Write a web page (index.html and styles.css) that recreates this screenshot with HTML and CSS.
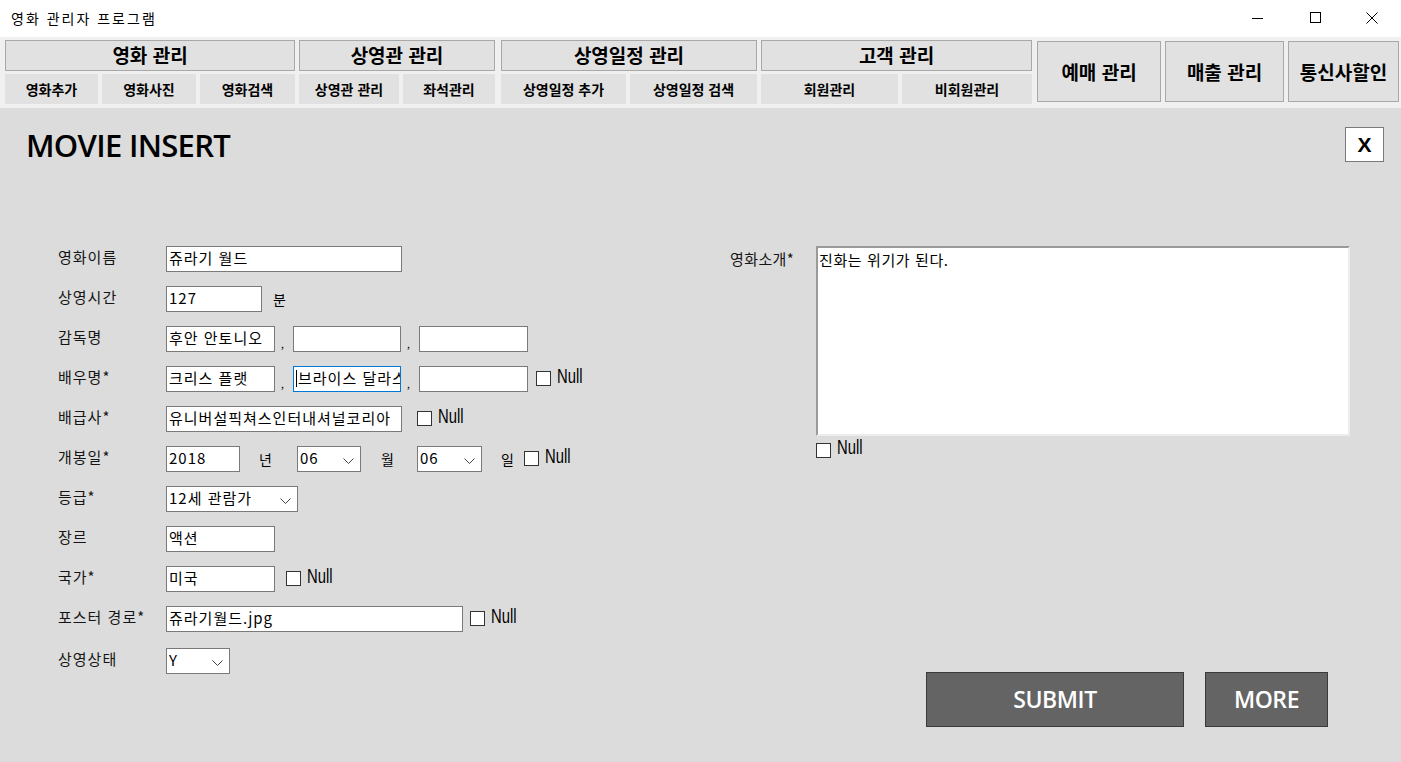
FILE: index.html
```html
<!DOCTYPE html>
<html lang="ko">
<head>
<meta charset="utf-8">
<title>영화 관리자 프로그램</title>
<link rel="stylesheet" href="styles.css">
</head>
<body>
<div class="window">
  <header class="titlebar">
    <span class="title">영화 관리자 프로그램</span>
    <div class="controls">
      <span class="ctl"><svg width="12" height="12" viewBox="0 0 12 12"><path d="M0 6.5H11" stroke="#000" stroke-width="1" fill="none"/></svg></span>
      <span class="ctl"><svg width="12" height="12" viewBox="0 0 12 12"><rect x="0.5" y="0.5" width="10" height="10" stroke="#000" stroke-width="1" fill="none"/></svg></span>
      <span class="ctl"><svg width="12" height="12" viewBox="0 0 12 12"><path d="M0.5 0.5L11.5 11.5M11.5 0.5L0.5 11.5" stroke="#000" stroke-width="1" fill="none"/></svg></span>
    </div>
  </header>

  <nav class="menu">
    <div class="group g1">
      <div class="ghead">영화 관리</div>
      <div class="subs">
        <div class="sub w93">영화추가</div>
        <div class="sub w94">영화사진</div>
        <div class="sub w95">영화검색</div>
      </div>
    </div>
    <div class="group g2">
      <div class="ghead">상영관 관리</div>
      <div class="subs">
        <div class="sub w100">상영관 관리</div>
        <div class="sub w92">좌석관리</div>
      </div>
    </div>
    <div class="group g3">
      <div class="ghead">상영일정 관리</div>
      <div class="subs">
        <div class="sub w125">상영일정 추가</div>
        <div class="sub w127">상영일정 검색</div>
      </div>
    </div>
    <div class="group g4">
      <div class="ghead">고객 관리</div>
      <div class="subs">
        <div class="sub w137">회원관리</div>
        <div class="sub w130">비회원관리</div>
      </div>
    </div>
    <div class="bigbtn b1">예매 관리</div>
    <div class="bigbtn b2">매출 관리</div>
    <div class="bigbtn b3">통신사할인</div>
  </nav>

  <main class="content">
    <div class="head">
      <h1 class="heading">MOVIE INSERT</h1>
      <div class="closebox">X</div>
    </div>

    <div class="formarea">
      <div class="leftcol">
        <div class="row">
          <span class="label">영화이름</span>
          <span class="input w236">쥬라기 월드</span>
        </div>
        <div class="row">
          <span class="label">상영시간</span>
          <span class="input w96">127</span>
          <span class="unit u-bun">분</span>
        </div>
        <div class="row">
          <span class="label">감독명</span>
          <span class="input w109">후안 안토니오</span>
          <span class="comma">,</span>
          <span class="input w108"></span>
          <span class="comma">,</span>
          <span class="input w109"></span>
        </div>
        <div class="row">
          <span class="label">배우명*</span>
          <span class="input w109">크리스 플랫</span>
          <span class="comma">,</span>
          <span class="input w108 focus"><span class="caret"></span>브라이스 달라스</span>
          <span class="comma">,</span>
          <span class="input w109"></span>
          <span class="check c8"></span><span class="null">Null</span>
        </div>
        <div class="row">
          <span class="label">배급사*</span>
          <span class="input w236">유니버설픽쳐스인터내셔널코리아</span>
          <span class="check c15"></span><span class="null">Null</span>
        </div>
        <div class="row">
          <span class="label">개봉일*</span>
          <span class="input w74">2018</span>
          <span class="unit u-year">년</span>
          <span class="select w64">06<svg class="chev" width="11" height="7" viewBox="0 0 11 7"><path d="M0.5 0.5L5.5 5.5L10.5 0.5" stroke="#444" fill="none"/></svg></span>
          <span class="unit u-month">월</span>
          <span class="select w65">06<svg class="chev" width="11" height="7" viewBox="0 0 11 7"><path d="M0.5 0.5L5.5 5.5L10.5 0.5" stroke="#444" fill="none"/></svg></span>
          <span class="unit u-day">일</span>
          <span class="check c5"></span><span class="null">Null</span>
        </div>
        <div class="row">
          <span class="label">등급*</span>
          <span class="select w132">12세 관람가<svg class="chev" width="11" height="7" viewBox="0 0 11 7"><path d="M0.5 0.5L5.5 5.5L10.5 0.5" stroke="#444" fill="none"/></svg></span>
        </div>
        <div class="row">
          <span class="label">장르</span>
          <span class="input w109">액션</span>
        </div>
        <div class="row">
          <span class="label">국가*</span>
          <span class="input w109">미국</span>
          <span class="check c11"></span><span class="null">Null</span>
        </div>
        <div class="row">
          <span class="label">포스터 경로*</span>
          <span class="input w297">쥬라기월드.jpg</span>
          <span class="check c7"></span><span class="null">Null</span>
        </div>
        <div class="row last">
          <span class="label">상영상태</span>
          <span class="select w64">Y<svg class="chev" width="11" height="7" viewBox="0 0 11 7"><path d="M0.5 0.5L5.5 5.5L10.5 0.5" stroke="#444" fill="none"/></svg></span>
        </div>
      </div>

      <div class="rightcol">
        <div class="introrow">
          <span class="label introlabel">영화소개*</span>
          <div class="introbox">
            <div class="textarea">진화는 위기가 된다.</div>
            <div class="nullrow"><span class="check"></span><span class="null">Null</span></div>
          </div>
        </div>
        <div class="actions">
          <div class="action submit">SUBMIT</div>
          <div class="action more">MORE</div>
        </div>
      </div>
    </div>
  </main>
</div>
</body>
</html>
```

FILE: styles.css
```css
* { box-sizing: border-box; }
html, body { margin: 0; padding: 0; }
body {
  width: 1401px;
  height: 762px;
  overflow: hidden;
  font-family: "Noto Sans CJK KR", "Noto Sans", sans-serif;
  color: #000;
  background: #dcdcdc;
}
.window { display: flex; flex-direction: column; height: 762px; }

.titlebar {
  height: 37px;
  background: #fff;
  display: flex;
  align-items: center;
  justify-content: space-between;
  padding-left: 11px;
}
.title { font-size: 14px; letter-spacing: 2px; margin-top: -2px; }
.controls { display: flex; height: 37px; }
.ctl { width: 58px; display: flex; align-items: center; justify-content: center; margin-top: -2px; }
.ctl:last-child { width: 56px; padding-right: 2px; }

.menu {
  height: 71px;
  background: #f0f0f0;
  display: flex;
  align-items: flex-start;
  padding: 3px 0 0 5px;
  gap: 4px;
}
.group { display: flex; flex-direction: column; }
.g1 { width: 290px; }
.g2 { width: 196px; }
.g3 { width: 256px; margin-left: 2px; }
.g4 { width: 271px; }
.ghead {
  height: 31px;
  background: #e1e1e1;
  border: 1px solid #a8a8a8;
  font-weight: 700;
  font-size: 19px;
  display: flex;
  align-items: center;
  justify-content: center;
  padding-bottom: 2px;
}
.subs { display: flex; gap: 4px; margin-top: 3px; }
.sub {
  height: 30px;
  background: #e1e1e1;
  font-weight: 700;
  font-size: 14px;
  display: flex;
  align-items: center;
  justify-content: center;
}
.w93 { width: 93px; } .w94 { width: 94px; } .w95 { width: 95px; }
.w100 { width: 100px; } .w92 { width: 92px; }
.w125 { width: 125px; } .w127 { width: 127px; }
.w137 { width: 137px; } .w130 { width: 130px; }

.bigbtn {
  height: 61px;
  margin-top: 1px;
  background: #e1e1e1;
  border: 1px solid #a8a8a8;
  font-weight: 700;
  font-size: 19px;
  display: flex;
  align-items: center;
  justify-content: center;
}
.b1 { width: 124px; margin-left: 1px; }
.b2 { width: 119px; }
.b3 { width: 111px; }

.content { flex: 1; padding: 19px 17px 0 27px; display: flex; flex-direction: column; }
.head { display: flex; justify-content: space-between; align-items: flex-start; height: 119px; }
.heading {
  margin: 0;
  margin-left: -1px;
  font-family: "Open Sans", sans-serif;
  font-weight: 600;
  font-size: 31px;
  line-height: 36px;
  letter-spacing: -0.7px;
}
.closebox {
  width: 39px;
  height: 35px;
  background: #fff;
  border: 1px solid #7a7a7a;
  font-family: "Liberation Sans", sans-serif;
  font-weight: 700;
  font-size: 21px;
  display: flex;
  align-items: center;
  justify-content: center;
}

.formarea { display: flex; padding-left: 31px; }
.leftcol { width: 672px; display: flex; flex-direction: column; gap: 14px; }
.row { display: flex; align-items: flex-start; height: 26px; font-size: 15px; }
.row.last { margin-top: 2px; }
.label { width: 108px; flex: none; font-size: 15px; letter-spacing: 1px; line-height: 20px; padding-top: 1px; color: #151515; }
.input, .select {
  flex: none;
  height: 26px;
  background: #fff;
  border: 1px solid #7a7a7a;
  font-size: 15px;
  line-height: 20px;
  padding: 1px 3px 0 2px;
  white-space: nowrap;
  overflow: hidden;
  letter-spacing: 1px;
  position: relative;
}
.input.focus { border-color: #0078d7; padding-left: 2px; }
.caret { display: inline-block; width: 1px; height: 17px; background: #000; vertical-align: -3px; margin-right: 1px; }
.select { display: flex; justify-content: space-between; align-items: flex-start; padding-right: 6px; }
.chev { margin-top: 10px; flex: none; }
.w236 { width: 236px; } .w96 { width: 96px; } .w109 { width: 109px; } .w108 { width: 108px; }
.w74 { width: 74px; } .w64 { width: 64px; } .w65 { width: 65px; } .w132 { width: 132px; } .w297 { width: 297px; }
.comma { width: 18px; flex: none; font-size: 10px; line-height: 20px; padding: 8px 0 0 6px; }
.unit { flex: none; line-height: 20px; padding-top: 3px; font-size: 14px; }
.u-bun { margin-left: 11px; }
.u-year { margin-left: 19px; width: 38px; }
.u-month { margin-left: 20px; width: 36px; }
.u-day { margin-left: 19px; }
.check {
  flex: none;
  width: 15px;
  height: 15px;
  background: #fff;
  border: 1px solid #333;
  margin-top: 5px;
}
.c8 { margin-left: 8px; }
.c15 { margin-left: 15px; }
.c5 { margin-left: 10px; }
.c11 { margin-left: 11px; }
.c7 { margin-left: 7px; }
.null {
  font-family: "Liberation Sans", sans-serif;
  font-size: 20px;
  margin-left: 6px;
  line-height: 22px;
  margin-top: -1px;
  transform: scaleX(0.74);
  transform-origin: left center;
  display: inline-block;
  width: 27px;
}

.rightcol { flex: 1; display: flex; flex-direction: column; }
.introrow { display: flex; margin-left: 0; }
.introlabel { width: 86px; padding-top: 3px; font-size: 15px; letter-spacing: 0.4px; }
.introbox { display: flex; flex-direction: column; }
.textarea {
  width: 534px;
  height: 190px;
  background: #fff;
  border-top: 2px solid #9a9a9a;
  border-left: 2px solid #9a9a9a;
  border-right: 2px solid #ececec;
  border-bottom: 2px solid #ececec;
  font-size: 15px;
  line-height: 20px;
  padding: 2px 1px;
  letter-spacing: 0.6px;
}
.nullrow { display: flex; align-items: flex-start; margin-top: 1px; }
.nullrow .check { margin-top: 6px; }

.actions { display: flex; gap: 21px; margin-top: 214px; margin-left: 196px; }
.action {
  height: 55px;
  background: #646464;
  border: 1px solid #3a3a3a;
  color: #fff;
  font-family: "Open Sans", sans-serif;
  font-weight: 600;
  font-size: 23px;
  letter-spacing: -0.4px;
  display: flex;
  align-items: center;
  justify-content: center;
  padding-bottom: 2px;
}
.submit { width: 258px; }
.more { width: 123px; }
```
